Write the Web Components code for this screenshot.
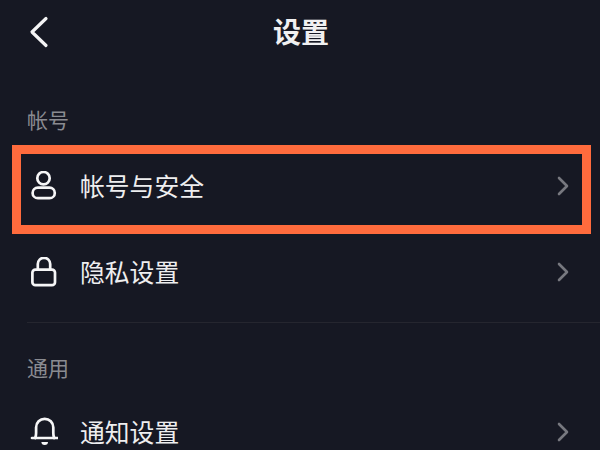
<!DOCTYPE html>
<html lang="zh">
<head>
<meta charset="utf-8">
<title>设置</title>
<style>
  html, body {
    margin: 0;
    height: 100%;
    overflow: hidden;
    background: #161823;
  }
  body {
    font-family: "Noto Sans CJK SC", "Liberation Sans", sans-serif;
    color: #f2f2f3;
  }
</style>
</head>
<body>
<settings-page>
  <settings-header>设置</settings-header>
  <section-label style="--top: 36px">帐号</section-label>
  <settings-row icon="user" highlighted style="--top: 3px">帐号与安全</settings-row>
  <settings-row icon="lock">隐私设置</settings-row>
  <settings-divider></settings-divider>
  <section-label style="--top: 25px">通用</section-label>
  <settings-row icon="bell" style="--top: 1px">通知设置</settings-row>
</settings-page>

<script>
const ICONS = {
  user: `
    <circle cx="15.5" cy="7.2" r="6.2"/>
    <rect x="4.6" y="16.6" width="22.2" height="10.6" rx="5.3"/>`,
  lock: `
    <rect x="4.4" y="12.6" width="22.6" height="15.6" rx="3"/>
    <path d="M9.8 12.6V7a6.2 6.2 0 0 1 12.4 0v5.6"/>`,
  bell: `
    <path d="M4 21h25.4"/>
    <path d="M7.2 21c.6-1.5.9-3 .9-5v-5.6a8.6 8.6 0 0 1 17.2 0V16c0 2 .3 3.5.9 5"/>
    <path d="M13.4 25h6.6a3.3 3 0 0 1-6.6 0z" fill="#f6f6f7" stroke="none"/>`,
};

class SettingsPage extends HTMLElement {
  constructor() {
    super();
    this.attachShadow({ mode: "open" });
    this.shadowRoot.innerHTML = `
      <style>
        :host {
          display: flex;
          flex-direction: column;
          width: 600px;
          height: 450px;
          overflow: hidden;
        }
      </style>
      <slot></slot>
    `;
  }
}

class SettingsHeader extends HTMLElement {
  constructor() {
    super();
    this.attachShadow({ mode: "open" });
    this.shadowRoot.innerHTML = `
      <style>
        :host {
          display: grid;
          grid-template-columns: 1fr auto 1fr;
          align-items: center;
          flex: none;
          height: 64px;
        }
        svg {
          display: block;
          margin-left: 29px;
          fill: none;
          stroke: #f4f4f5;
          stroke-width: 3.2;
          stroke-linecap: round;
          stroke-linejoin: round;
        }
        .title {
          font-size: 28px;
          font-weight: 700;
          line-height: 40px;
          color: #f0f0f1;
          padding: 0 0 2px 2px;
        }
      </style>
      <svg width="20" height="32" viewBox="0 0 20 32">
        <path d="M17 2.5 3 16l14 13.5"/>
      </svg>
      <div class="title"><slot></slot></div>
      <span></span>
    `;
  }
}

class SectionLabel extends HTMLElement {
  constructor() {
    super();
    this.attachShadow({ mode: "open" });
    this.shadowRoot.innerHTML = `
      <style>
        :host {
          display: block;
          flex: none;
          margin-top: var(--top, 0);
          padding-left: 27px;
          height: 40px;
          line-height: 38px;
          font-size: 21px;
          color: #8a8b91;
        }
      </style>
      <slot></slot>
    `;
  }
}

class SettingsRow extends HTMLElement {
  constructor() {
    super();
    this.attachShadow({ mode: "open" });
  }

  connectedCallback() {
    const icon = ICONS[this.getAttribute("icon")] || "";
    this.shadowRoot.innerHTML = `
      <style>
        :host {
          display: flex;
          align-items: center;
          position: relative;
          flex: none;
          height: 86px;
          margin-top: var(--top, 0);
          padding: 0 31px 0 28px;
          font-size: 24.8px;
          color: #eeeeef;
        }
        .icon {
          flex: none;
          margin-right: 23px;
          fill: none;
          stroke: #f6f6f7;
          stroke-width: 2.7;
          stroke-linecap: round;
          stroke-linejoin: round;
        }
        .label {
          flex: 1;
          margin-left: -1px;
          padding-bottom: 3px;
        }
        .chevron {
          flex: none;
          fill: none;
          stroke: #77787f;
          stroke-width: 2.6;
          stroke-linecap: round;
          stroke-linejoin: round;
        }
        .highlight {
          position: absolute;
          left: 12px;
          right: 9px;
          top: 2px;
          bottom: -5px;
          border: 9px solid #ff6b3d;
        }
      </style>
      <svg class="icon" width="30" height="30" viewBox="0 0 30 30">${icon}</svg>
      <span class="label"><slot></slot></span>
      <svg class="chevron" width="12" height="20" viewBox="0 0 12 20">
        <path d="M2 2l8 8-8 8"/>
      </svg>
      ${this.hasAttribute("highlighted") ? '<div class="highlight"></div>' : ""}
    `;
  }
}

class SettingsDivider extends HTMLElement {
  constructor() {
    super();
    this.attachShadow({ mode: "open" });
    this.shadowRoot.innerHTML = `
      <style>
        :host {
          display: block;
          flex: none;
          height: 1px;
          margin: 7px 0 0 27px;
          background: #25262f;
        }
      </style>
    `;
  }
}

customElements.define("settings-page", SettingsPage);
customElements.define("settings-header", SettingsHeader);
customElements.define("section-label", SectionLabel);
customElements.define("settings-row", SettingsRow);
customElements.define("settings-divider", SettingsDivider);
</script>
</body>
</html>
